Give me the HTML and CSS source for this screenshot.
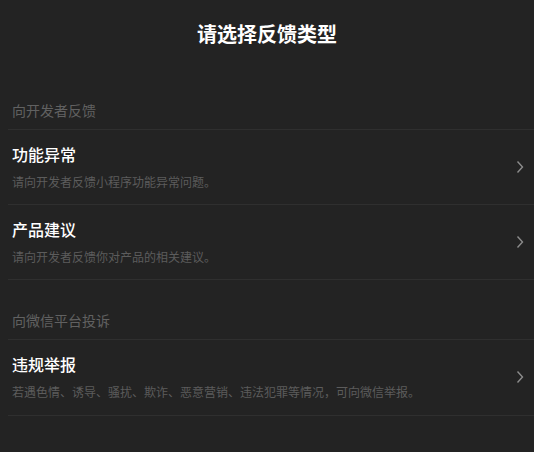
FILE: index.html
```html
<!DOCTYPE html>
<html lang="zh-CN">
<head>
  <meta charset="UTF-8">
  <meta name="viewport" content="width=device-width, initial-scale=1.0">
  <title>请选择反馈类型</title>
  <link rel="stylesheet" href="styles.css">
</head>
<body>
  <h1 class="page-title">请选择反馈类型</h1>

  <div class="group">
    <div class="group-label">向开发者反馈</div>
    <div class="item">
      <div class="item-text">
        <div class="item-title">功能异常</div>
        <div class="item-desc">请向开发者反馈小程序功能异常问题。</div>
      </div>
      <svg class="arrow" width="8" height="14" viewBox="0 0 8 14"><path d="M1.5 1.5 L6.5 7 L1.5 12.5" fill="none" stroke="currentColor" stroke-width="1.4"/></svg>
    </div>
    <div class="item">
      <div class="item-text">
        <div class="item-title">产品建议</div>
        <div class="item-desc">请向开发者反馈你对产品的相关建议。</div>
      </div>
      <svg class="arrow" width="8" height="14" viewBox="0 0 8 14"><path d="M1.5 1.5 L6.5 7 L1.5 12.5" fill="none" stroke="currentColor" stroke-width="1.4"/></svg>
    </div>
  </div>

  <div class="group">
    <div class="group-label">向微信平台投诉</div>
    <div class="item item-last">
      <div class="item-text">
        <div class="item-title">违规举报</div>
        <div class="item-desc">若遇色情、诱导、骚扰、欺诈、恶意营销、违法犯罪等情况，可向微信举报。</div>
      </div>
      <svg class="arrow" width="8" height="14" viewBox="0 0 8 14"><path d="M1.5 1.5 L6.5 7 L1.5 12.5" fill="none" stroke="currentColor" stroke-width="1.4"/></svg>
    </div>
  </div>
</body>
</html>
```

FILE: styles.css
```css
body {
  margin: 0;
  background: #232323;
  font-family: "Noto Sans CJK SC", "Noto Sans", sans-serif;
  color: #fff;
}
.page-title {
  margin: 0;
  padding: 22px 0 24px;
  font-size: 20px;
  line-height: 24px;
  font-weight: 700;
  text-align: center;
}
.group {
  margin-left: 8px;
}
.group-label {
  padding: 30px 0 9px 4px;
  font-size: 14px;
  line-height: 20px;
  color: #616161;
  border-bottom: 1px solid #2f2f2f;
}
.item {
  display: flex;
  align-items: center;
  padding: 13px 0 13px 4px;
  border-bottom: 1px solid #2f2f2f;
}
.item-last {
  padding-bottom: 14px;
}
.item-text {
  flex: 1;
}
.item-title {
  font-size: 16px;
  line-height: 22px;
  font-weight: 500;
}
.item-desc {
  margin-top: 8px;
  font-size: 12px;
  line-height: 18px;
  color: #5c5c5c;
}
.arrow {
  margin-right: 10px;
  color: #8c8c8c;
}
```
